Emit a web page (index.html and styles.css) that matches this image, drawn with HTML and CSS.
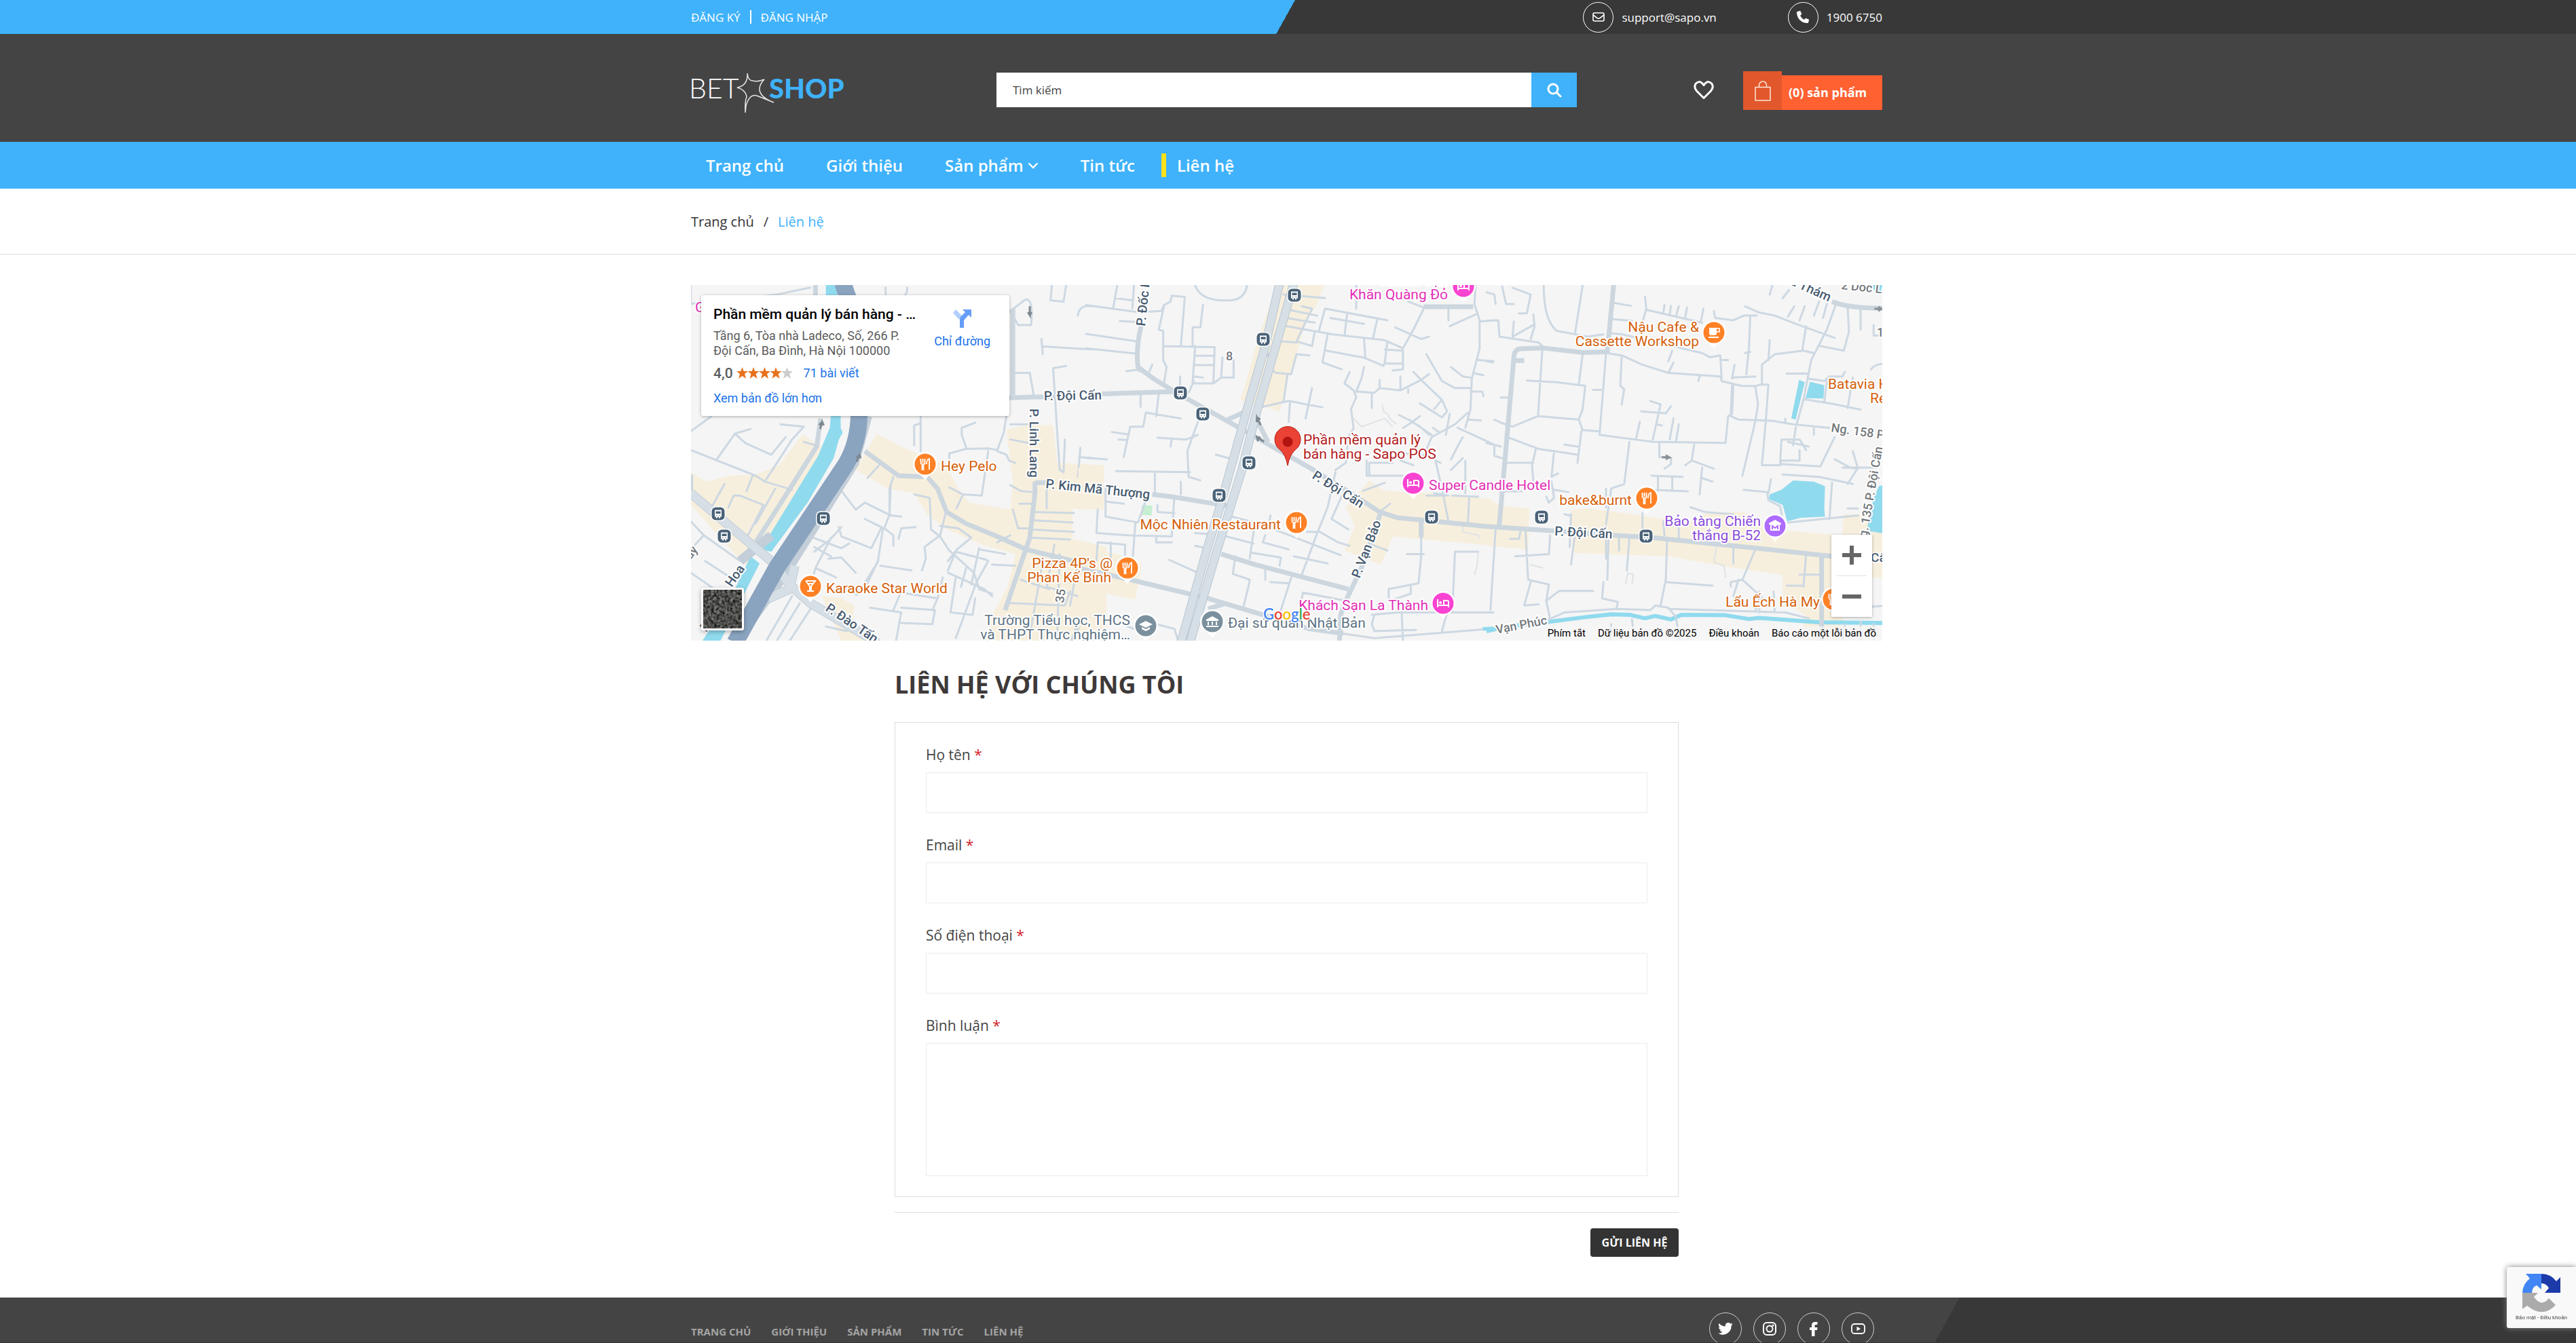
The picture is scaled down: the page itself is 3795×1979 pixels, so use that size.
FILE: index.html
```html
<!DOCTYPE html>
<html lang="vi">
<head>
<meta charset="utf-8">
<title>Liên hệ - Bet Shop</title>
<meta name="viewport" content="width=device-width, initial-scale=1">
<link rel="stylesheet" href="styles.css">
</head>
<body>
<div class="page">
<header>
  <div class="topbar">
    <div class="container topbar-row">
      <div class="account"><a href="#">ĐĂNG KÝ</a><span class="divider"></span><a href="#">ĐĂNG NHẬP</a></div>
      <div class="contacts">
        <a href="mailto:support@sapo.vn"><span class="ring ring-sm"><svg width="18" height="14" viewBox="0 0 18 14" fill="none" stroke="#fff" stroke-width="1.6"><rect x="1" y="1" width="16" height="12" rx="2"/><path d="M1 4l6 4.6q2 1.4 4 0L17 4"/></svg></span>support@sapo.vn</a>
        <a href="tel:19006750"><span class="ring ring-sm"><svg width="18" height="18" viewBox="0 0 18 18" fill="#fff"><path d="M1 .9 4.6 0q.7 0 1 .6l1.5 3.6q.2.7-.3 1.2L5 7q2 4 6 6l1.600-1.800q.5-.5 1.200-.3l3.600 1.500q.7.300.6 1l-.9 3.700q-.2.800-1 .9Q9 18 4.500 13.500T0 2.000Q.1 1.100 1 .9Z"/></svg></span>1900 6750</a>
      </div>
    </div>
  </div>
  <div class="masthead">
    <div class="container masthead-row">
      <a class="logo" href="#" aria-label="Bet Shop">
        <svg width="240" height="70" viewBox="0 -4 240 70"><text x="-3" y="43" class="logo-thin">BET</text><text x="115" y="43" class="logo-bold">SHOP</text><path d="M83 6Q84 17 91 17Q98 19 108 15Q100 23 101 31Q103 42 122 49L97 39Q86 36 81 54L80 64Q79 48 82 40Q80 30 68 27Q84 24 83 6Z" fill="none" stroke="#e4e4e4" stroke-width="1.500"/></svg>
      </a>
      <form class="search" role="search">
        <input type="text" placeholder="Tìm kiếm" aria-label="Tìm kiếm">
        <button type="button" aria-label="Tìm"><svg width="22" height="22" viewBox="0 0 22 22" fill="none" stroke="#fff" stroke-width="3"><circle cx="9" cy="9" r="7"/><path d="M14 14l6 6" stroke-linecap="round"/></svg></button>
      </form>
      <a class="wish" href="#" aria-label="Yêu thích"><svg width="30" height="28" viewBox="0 0 30 28" fill="none" stroke="#fff" stroke-width="3"><path d="M15 25.500 4.500 15Q0 10 3 4.500Q8-1 13 4L15 6.500 17 4Q22-1 27 4.500Q30 10 25.500 15Z" stroke-linejoin="round"/></svg></a>
      <a class="cart" href="#"><span class="cart-icon"><svg width="24" height="30" viewBox="0 0 24 30" fill="none" stroke="#ffe9d8" stroke-width="1.500"><rect x="1" y="9.500" width="22" height="19.500"/><path d="M6.500 9V6.500a5.500 5.500 0 0 1 11 0V9"/></svg></span><span class="cart-text">(0) sản phẩm</span></a>
    </div>
  </div>
  <nav class="menu">
    <div class="container">
      <ul>
        <li><a href="#">Trang chủ</a></li>
        <li><a href="#">Giới thiệu</a></li>
        <li><a href="#">Sản phẩm<svg width="16" height="10" viewBox="0 0 16 10" fill="none" stroke="#fff" stroke-width="2.400"><path d="M1.500 1.500 8 8l6.500-6.500"/></svg></a></li>
        <li><a href="#">Tin tức</a></li>
        <li class="active"><a href="#">Liên hệ</a></li>
      </ul>
    </div>
  </nav>
</header>
<div class="crumbs">
  <div class="container crumbs-row"><a href="#">Trang chủ</a><span>/</span><span class="here">Liên hệ</span></div>
</div>
<main class="container">
  <section class="map" aria-label="Bản đồ">
    <svg class="map-canvas" viewBox="0 0 1755 524" preserveAspectRatio="xMidYMid slice">
      <defs>
        <g id="bus"><rect x="-11" y="-11" width="22" height="22" rx="7" fill="#fff"/><rect x="-9.500" y="-9.500" width="19" height="19" rx="6" fill="#4b6378"/><path d="M-5-5.500h10v10h-2v2h-2v-2h-2v2h-2v-2h-2z" fill="#fff"/><path d="M-3.500-3.500h7v3.500h-7zM-3 2h1.500v1h-1.500zM1.500 2h1.500v1h-1.500z" fill="#4b6378"/></g>
        <path id="drop" d="M0 23.500Q-4 17-11 14A18 18 0 1 1 11 14Q4 17 0 23.500Z" fill="#fff"/>
        <g id="food"><use href="#drop"/><circle r="15.500" fill="#ff8126"/><path d="M-6.500-8v6q.5 2 2 2v8h2v-8q2 0 2-2v-6M-3.500-8v6M2 0q0-7 4-8v16" fill="none" stroke="#fff" stroke-width="1.800"/></g>
        <g id="bed"><use href="#drop"/><circle r="15.500" fill="#f943d1"/><path d="M-8-6V6M8 6V-2q0-2-2-2h-5v6M-8 3H8" fill="none" stroke="#fff" stroke-width="2"/><circle cx="-4" cy="-1" r="2" fill="#fff"/></g>
        <g id="grad"><use href="#drop"/><circle r="15.500" fill="#7b909d"/><path d="M0-7 10-2 0 3-10-2ZM-6 2v3l6 3 6-3v-3l-6 3z" fill="#fff"/></g>
        <g id="house"><path d="M0-8 9-3v2H-9v-2ZM-7 0h2v5h-2zM-1 0h2v5h-2zM5 0h2v5h-2zM-9 6H9v2H-9z" fill="#fff"/></g>
      </defs>
      <rect width="1755" height="524" fill="#f5f5f5"/>
      <!-- western sheet -->
      <g transform="translate(-8 -10) scale(.3827 .3444)">
        <path class="zone" d="M20 830 80 870 170 845 270 840 360 800 450 670 525 720 440 930 290 1150 230 1230 20 970ZM735 665 830 720 1000 800 1050 900 1090 960 1250 990 1260 870 1235 650 1300 630 1415 628 1430 790 1610 800 1610 990 1490 985 1490 1115 1620 1150 1620 1560 1150 1560 1180 1440 1240 1320 1270 1180 1140 1140 1000 1070 930 1010 880 920 780 900 655 820ZM525 1360 600 1370 650 1400 640 1480 760 1553 600 1553Z"/>
        <path class="water" d="M540 20h45v150h-45zM560 580H597V640L605 660 590 690 570 770 470 960 330 1170 290 1160 510 760 555 640ZM250 1190 285 1220 130 1560H60L190 1330Z"/>
        <path class="lane" d="M20 110 200 90 350 70 480 40M20 100V20M770 40V80H825Q855 80 853 40M1410 95 1455 100 1465 30M1410 30 1405 95M1250 140 1310 90Q1340 90 1330 200L1280 200 1250 140M1370 260 1375 325M1375 292 1568 305M1510 160Q1515 110 1568 120M1270 405H1325L1340 500M1465 375 1415 385 1425 560 1440 820 1455 830 1460 690M905 740V560M880 715V630L905 620M1115 618 1063 640V670L1082 730M1015 770V750L1080 730 1165 728 1200 735 1225 660 1235 590M1200 740 1235 755 1245 780 1270 790M1165 740 1140 930 1068 925 1015 895M1068 925 1043 985M20 735 270 845 305 870 410 905M305 870 410 690 455 635 365 625M120 775 190 665 250 645M190 665 230 705 330 755 385 680M455 700 500 715M20 655 100 590M260 840 235 910M150 880 105 970M270 1050 345 900M165 980 185 930 210 930 300 970 240 1100M700 855 745 800M880 925 940 940 945 1075 980 1105 1015 1165 1110 1260 1130 1330 1180 1350M980 1060 1050 1070 1100 1110 1045 1160 1010 1210M600 910 655 990 690 960 790 1015 830 1020M790 880 785 1010 765 1070 800 1100 800 1145M690 1030 755 1065 715 1155 600 1105 590 1065M600 1065 555 1120 495 1170M480 1105 600 1155 630 1135M495 1150 560 1190M820 1115 830 1070 885 1065M800 850 785 900V1010M1000 1010 980 1100 920 1150 925 1200 910 1250M1160 1205 1040 1170 1010 1250M760 1070 740 1215 660 1355 620 1330M560 1110 500 1240 480 1320M550 1200 600 1195 655 1260M500 1240 580 1280M740 1210 690 1330M750 1230 870 1250M1165 1210 1120 1300 1040 1540M1130 1155 1100 1310M1010 1260 1150 1330 1180 1360M1040 1280 1020 1430 1105 1440 1115 1370M800 1340 970 1370 990 1280M970 1370 950 1420M830 1340 800 1420M710 1410 830 1430 810 1553M830 1475 950 1480 960 1420 830 1410M1080 1240 1060 1320M1270 1230 1180 1225M1230 1180 1130 1160M1250 1100 1200 1130M1260 990 1280 1070 1320 1070M1285 965H1330M1340 1000 1495 1005M1330 1035 1490 1045M1330 1075 1495 1085M1325 1110 1480 1118M1250 885 1290 910 1335 915M1390 985V900M1250 625H1340M1250 690 1320 705M1520 725 1510 850M1515 765 1568 770M1520 1160 1480 1400M1420 1140 1390 1320 1540 1370M1290 1290 1400 1330M1380 1180 1320 1560M1440 1180 1430 1560M1480 1340 1460 1400 1250 1390M75 1210 200 1300M70 1100 20 1160M20 1040 70 1100 210 1210M20 1260 150 1360M440 1390 350 1553M490 1400 400 1553M410 1360 310 1553M540 1490 620 1510"/>
        <path class="street" d="M500 20V80M690 740 820 845 930 850 970 900 1005 1000 1080 1050 1200 1105 1310 1160 1568 1230M1240 512 1340 508 1420 508M1345 870V920L1325 1110 1230 1420M1345 875H1420M1260 130V500M1568 1290 1540 1390 1490 1553M520 600 505 720 270 1130M20 840V910"/>
        <path class="avenue-edge" d="M20 920 340 1220 400 1310 480 1390 740 1560M320 1370 400 1330 420 1230M210 1210 330 1100M700 590 650 790 380 1270 190 1560"/>
        <path class="avenue" d="M20 920 340 1220 400 1310 480 1390 740 1560M320 1370 400 1330 420 1230"/>
        <path class="highway" d="M605 20 640 130 668 560Q670 700 615 800L350 1240 190 1560"/>
        <path d="M518 645 526 615 532 630M526 615 514 628M658 785 670 757 674 770M670 757 658 768M1325 120V158L1318 145M1325 158 1332 145" stroke="#7d8890" stroke-width="3" fill="none"/>
      </g>
      <!-- central sheet -->
      <g transform="translate(582 -10) scale(.3827 .3444)">
        <path class="zone" d="M740 20 915 30 890 110 840 200 810 330 780 420 745 570 595 520 660 270 690 170ZM-30 810 55 820 45 985-30 990ZM-30 1150 120 1180 215 1220 190 1375 60 1345-30 1500ZM1090 865 1150 910 1330 920 1555 945 1600 980 1600 1148 1180 1105 1135 1225 995 1165 1035 1060 1000 980Z"/>
        <path d="M215 970 255 973 252 1015 213 1012Z" fill="#c5efd0"/>
        <path class="lane" d="M0 115 200 145 290 140 300 115 325 100 330 75 380 80 365 290M120 30 105 125M185 20 178 130M110 85 180 95M300 120 280 220 297 225V350L310 380 300 450M297 290 495 295 490 450H410L420 290M420 332H495M420 372H490M450 115 440 210H410V295M415 420 450 425M490 450 520 425 525 340M520 425H568V350M395 490 415 440M130 183 195 187M0 238 195 270M0 300 190 322M155 398 195 392 240 410 255 370M362 420V470M210 495V550M280 490 270 590M230 575 365 600M230 575 220 635 170 635 145 765M100 658 160 668M125 690 155 692M435 600 390 740 395 850 440 865M275 682 385 690 430 670M330 685 325 720M115 825 400 830M265 835V920M0 768 80 775M365 870V925M75 890V1020L200 1045 240 920M75 955 145 965M45 990 40 1090 160 1100 330 1105 340 930M275 970V1000L340 1005M180 1190 190 1045M40 1210 45 1130 150 1140V1190M95 1130V1200M270 1105V1130H330M500 755 550 770M420 30Q440 100 550 95 610 95 620 30M760 70 920 85M780 135 890 160M770 170 880 190M770 205 950 240 1150 265 1220 300M830 120 870 130 810 270 870 290 880 230M750 270 810 275M860 330 810 325 790 410 730 405 720 395M775 415 760 530M680 550 780 525 850 540 910 552M870 470 845 600M785 530 780 615M895 230 920 130 1160 180M940 170 1070 195M1120 180 1105 255M1005 150 995 245M1040 130V20M930 240 910 360 985 390M925 310 1070 340 1145 375 1150 360 1160 270M1070 260 1075 340M1150 305 1220 310 1220 390 1180 395M1155 365H1215M1220 300 1260 220 1300 130M1190 210 1290 260 1320 250M1400 205 1500 155M1568 180 1515 185M1240 100 1300 125M1395 120V180M1500 20 1495 110 1515 180 1515 300 1485 430 1480 560 1460 640M1430 640 1568 710M1470 605 1520 608M1405 380 1450 420 1480 425M1310 325 1370 440 1420 470H1480M1400 580 1385 670M1510 350 1568 355M1490 405 1530 415M1480 485H1525L1530 505M1015 400 995 450 1030 480 1040 510 1020 560 1030 640 1010 680 1000 790 960 820M1040 485 1110 490 1130 470 1210 480 1290 435 1320 410M1070 380 1060 430 1040 485M1100 490V555M1130 470V435M1210 480V420M1240 490V475M1260 400 1290 435 1370 520 1390 570 1370 595 1320 560 1285 535M1370 520 1340 560M1205 585 1250 610 1330 670M1285 590 1250 620 1220 640M1280 630 1320 670M1335 640 1360 660M1450 680 1430 720 1405 775M1080 780V845H1140 1240M1090 840V790H1130 1180M1210 780 1260 800M1160 740 1300 760 1330 680 1420 625 1470 575M1460 780V920M1405 820 1450 770M1365 790 1345 780 1370 900 1395 1040M1310 930H1380M1410 930 1510 935M1475 940 1470 1050M1340 920 1395 930M960 830 930 980 890 1090 830 1270M985 930 945 1030 1010 1075M1150 875 1065 910M1170 965 1130 1000M850 1085H900L970 1130 1015 1145M560 1020 650 1045 760 1090 980 1185M690 1100 680 1130 780 1160M650 1045 630 1200M540 1105 645 1135M710 1015 700 1070M640 1175 750 1195 745 1230M800 1190 930 1220M575 1190 565 1265 630 1290 625 1320 605 1410M690 1240V1290M710 1300 780 1305M790 1280 750 1420M1100 1140 1160 1165M1300 1180H1235M1290 1040 1290 1190 1280 1305 1165 1330V1370M1250 1320V1350L1170 1380M1410 1430 1420 1170H1510M830 1370 835 1345 1000 1380M320 1205 430 1260M420 1090 470 1095M420 1145 460 1155M270 1480 340 1500 355 1553M160 1490 230 1520M1100 1440 1200 1430 1568 1430M1110 1440 1100 1480 1110 1510 1270 1505M1215 1430 1220 1553M1390 1430 1370 1510M985 1520 1110 1540 1560 1500"/>
        <path class="faint" d="M1030 600 1060 635 1150 600 1180 635M1140 540 1145 570 1160 580 1170 600 1195 625M1450 1060V1085L1510 1100 1515 1115M1510 1170 1505 1230 1495 1270"/>
        <path class="street" d="M215 190Q190 300 200 380L260 430 340 485 380 510 590 640 700 710 860 810M60 495 340 485M255 925 330 935 550 975M860 810 1020 920 1130 1000 1200 1025 1300 1035 1568 1065M1135 1000 1060 1240 1000 1380 980 1440 975 1560M520 1180 650 1225 1010 1330M190 1295 470 1370 680 1440 860 1500 990 1520M-30 1240 190 1295M545 605 605 575M690 325 720 335M700 700 655 600M1300 122H1490M1290 1035V1110M470 1415 540 1390"/>
        <path class="road-edge" d="M745 20 690 290 630 520 590 680 520 960 460 1180 365 1560M800 20 720 330 650 600 600 820 550 1000 500 1180 400 1560"/>
        <path class="road" d="M745 20 690 290 630 520 590 680 520 960 460 1180 365 1560M800 20 720 330 650 600 600 820 550 1000 500 1180 400 1560"/>
        <path d="M672 628 658 596 657 616M658 596 671 604M685 700 658 680 662 698M658 680 672 682" stroke="#7d8890" stroke-width="3" fill="none"/>
        <path class="water" d="M1525 1493 1568 1490V1508H1530Z"/>
      </g>
      <!-- eastern sheet -->
      <g transform="translate(1172 -10) scale(.3827 .3444)">
        <path class="zone" d="M0 950 20 970 165 985 160 1160 0 1145ZM325 990 400 985 500 1000 680 1030 800 1040 850 1000 990 1000 1050 1035 1150 1080 1370 1100 1375 1010 1530 1015V1280L1390 1290 1360 1553H1215L1225 1440 1140 1380 1140 1270 900 1230 700 1190 330 1175Z"/>
        <path class="water" d="M1203 435 1225 445 1190 605 1173 600ZM1245 443 1300 457 1297 515 1228 513ZM1180 865 1260 870 1303 890 1300 985 1303 1020 1210 1025 1157 1040 1140 970 1087 945 1090 925 1135 905ZM1510 890 1530 883V1092L1463 1080 1490 940ZM1465 35 1525 20V70Z"/>
        <path class="canal" d="M0 1510 80 1490 240 1470 380 1450 480 1438 550 1440 610 1455 650 1445 710 1460 750 1440 920 1442 1010 1458 1050 1453 1280 1472 1530 1475"/>
        <path class="lane" d="M0 60 30 70 35 110M60 35 75 110 105 110M100 40 170 70 155 150 125 150M0 182 45 180 50 250 200 275 215 290M105 185 100 250 180 200M180 155 185 205 170 260M220 30Q220 180 270 225L390 250 450 240M370 30 340 240M215 300 205 470 198 590 100 635 60 620 30 605M155 438 270 445 380 460 370 560 355 605 198 590M370 325 355 455M355 605 370 650 430 655M365 655 350 790M80 680 200 730 350 755M300 712 350 720M190 730 175 800 180 865M65 790H180M260 740 250 850 275 835M250 870 260 940 240 960 230 935M460 320 435 670 570 690 640 700 920 705 930 590 945 580 950 455M460 320 520 330 600 370 700 405 900 420 905 440 980 460 1040 462M520 335 515 460 530 475 520 540M410 478H440M490 105 555 118M485 175 560 182M480 235 520 240 600 260 830 320 860 338 900 330M610 80 615 130 590 230M615 135 830 190M685 115 680 150M710 118 705 155M740 120 730 160M772 125 765 165M835 130 825 185M875 140 880 170 950 180 990 160 1040 160M995 120 1045 145 1110 160 1190 195 1340 255M900 335 905 430M905 350H930M700 355 715 310M700 405 720 360M1015 165 1010 300 1000 410M995 320 1015 315M950 425 1035 420M955 370 945 430M945 460 940 590 970 605 1100 610 1180 625 1320 640M1035 465 1045 540 1035 610 985 845M1040 460 1055 455 1085 455 1075 610 1060 800M1060 450V370L1110 325 1220 310 1260 320M1090 265 1085 350M1100 30 1090 70M1140 85 1165 50M1160 165 1185 120M1205 180 1225 120M1260 160 1280 100M1295 170 1310 110M1345 110 1310 220 1250 350 1220 520 1190 640 1180 715M1390 120 1395 230 1375 310 1285 290M1230 205 1215 310M1155 408 1235 408M1240 430 1300 440 1320 420 1370 420 1380 400M1225 518 1320 535 1440 562M1310 440 1300 530M1410 425 1390 555M1490 200V245H1510M1480 390Q1490 370 1530 365M1440 130V220M820 420 815 440M630 525 670 540 640 690M595 570 690 578 710 548M590 615 575 690M655 625 675 630M720 600 705 690M740 625 730 695M665 705V765L710 770V795L685 815M800 705 790 780 765 800M790 780 875 815M830 810 820 925M830 855 870 870M635 845 755 850M660 850V910M715 850V905M635 905 775 912M550 700 530 880 480 900 460 1050M470 1100 465 1290M460 900 460 980M460 1060V1200M150 1085 160 1290 240 1310 230 1380 245 1460M90 1115H125L130 1085M110 1190 240 1180 245 1100M170 1300 145 1400 200 1395M35 1070 15 1420M325 1010 320 1150M300 1010 320 1015M340 1100 325 1225M550 1110 540 1250M695 1120 690 1290 670 1400M690 1300 870 1315M510 1100V1165M230 1380 280 1338H410M450 1300 445 1370 505 1385 500 1415 300 1430 240 1460M500 1415 630 1420 650 1400 700 1410 730 1450M600 1005V1100M680 1040 685 1100M740 1060V1110M785 980 840 1000 950 1010M950 1150V1220M1035 1160 985 1290 940 1300V1320M985 1290 1060 1365 1035 1420M970 1290 950 1360M700 1415 1150 1430 1240 1455M730 1460 745 1553M480 1480 475 1553M560 1460 570 1553M1085 920 1095 860M990 905 1080 915 1085 950 1130 975 1140 1030M1160 1045 1430 1015M1140 840 1280 850 1410 880M1060 800 1130 800 1135 780 1205 780 1205 735M1135 690H1205L1230 735M1135 695 1130 795 1285 805 1340 680M1260 640V670M1340 775 1400 810 1430 815 1410 740M1430 810 1390 880M1370 810H1500M1330 875 1320 1030M1205 1268H1290M1155 1315H1220M1230 1185 1220 1320M1390 985H1430M1050 1340V1430M1105 1340 1110 1430M1380 1480 1370 1553M1440 1470V1553M1490 1480V1553M1560 1400 1480 1405M0 705 55 720M30 720V760L60 770M0 355 25 360M55 510H85M50 912H135M260 905 315 915M1160 700 1240 720M1150 600V620"/>
        <path class="faint" d="M885 1150 875 1215 915 1230 920 1280M545 1255 535 1310M545 1265H565L560 1310M165 1225 220 1240"/>
        <path class="street" d="M490 20 465 315 370 318 215 298 125 302Q105 310 105 340L48 1070M0 1062 250 1080 490 1100 640 1110 1040 1155 1330 1190M1290 1190V1553M1330 100Q1400 130 1530 128M105 352H145"/>
        <path d="M675 766H703L690 757M703 766 690 775M1493 131H1520L1508 122M1520 131 1508 140" stroke="#8b9298" stroke-width="3" fill="none"/>
      </g>
      <use href="#bus" x="40" y="337"/><use href="#bus" x="49" y="370"/><use href="#bus" x="195" y="344"/><use href="#bus" x="889" y="15"/><use href="#bus" x="843" y="80"/><use href="#bus" x="721" y="159"/><use href="#bus" x="754" y="190"/><use href="#bus" x="822" y="262"/><use href="#bus" x="778" y="310"/><use href="#bus" x="1091" y="342"/><use href="#bus" x="1253" y="342"/><use href="#bus" x="1407" y="370"/>
      <use href="#food" x="345" y="264"/><use href="#food" x="892" y="350"/><use href="#food" x="643" y="417"/><use href="#food" x="1408" y="314"/><use href="#food" x="1683" y="463"/>
      <use href="#bed" x="1064" y="292"/><use href="#bed" x="1108" y="469"/><use href="#bed" x="1138" y="2"/>
      <use href="#grad" x="670" y="502"/>
      <g transform="translate(768 496)"><use href="#drop"/><circle r="15.500" fill="#7b909d"/><use href="#house"/></g>
      <g transform="translate(1597 355)"><use href="#drop"/><circle r="15.500" fill="#ae6bff"/><path d="M0-9 9-4v2H-9v-2ZM-7-2h14v9h-14z" fill="#fff"/><path d="M-4 5v-5l4 3 4-3v5" stroke="#ae6bff" stroke-width="2" fill="none"/></g>
      <g transform="translate(1507 70)"><use href="#drop"/><circle r="15.500" fill="#ff8126"/><path d="M-7-7H4V1q0 3-3 3h-5q-3 0-3-3zM-8 6H7v2H-8z" fill="#fff"/><path d="M4-6h4v5H4" fill="none" stroke="#fff" stroke-width="1.600"/></g>
      <g transform="translate(176 444)"><use href="#drop"/><circle r="15.500" fill="#ff8126"/><path d="M-7-8H7L1 0v7H5M-5 7H1M-1 7V0L-7-8M-4-4H4" fill="none" stroke="#fff" stroke-width="2"/></g>
      <path d="M879 266Q876 250 868 243A19 19 0 1 1 890 243Q882 250 879 266Z" fill="#ea4335" stroke="#b81d14"/><circle cx="879" cy="231" r="7.500" fill="#b31412"/>

      <g class="place eat">
        <text x="368" y="274">Hey Pelo</text>
        <text x="199" y="454">Karaoke Star World</text>
        <text x="621" y="417" text-anchor="end">Pizza 4P's @</text><text x="619" y="438" text-anchor="end">Phan Kế Bính</text>
        <text x="869" y="360" text-anchor="end">Mộc Nhiên Restaurant</text>
        <text x="1485" y="69" text-anchor="end">Nậu Cafe &amp;</text><text x="1485" y="90" text-anchor="end">Cassette Workshop</text>
        <text x="1386" y="324" text-anchor="end">bake&amp;burnt</text>
        <text x="1663" y="474" text-anchor="end">Lẩu Ếch Hà My</text>
        <text x="1675" y="153">Batavia H</text><text x="1737" y="174">Re</text>
      </g>
      <g class="place stay">
        <text x="6" y="40">G</text>
        <text x="1115" y="0" text-anchor="end">Khách Sạn</text><text x="1115" y="21" text-anchor="end">Khăn Quàng Đỏ</text>
        <text x="1087" y="302">Super Candle Hotel</text>
        <text x="1086" y="479" text-anchor="end">Khách Sạn La Thành</text>
      </g>
      <g class="place civic">
        <text x="647" y="501" text-anchor="end">Trường Tiểu học, THCS</text><text x="647" y="522" text-anchor="end">và THPT Thực nghiệm…</text>
        <text x="791" y="505">Đại sứ quán Nhật Bản</text>
      </g>
      <g class="place museum"><text x="1576" y="355" text-anchor="end">Bảo tàng Chiến</text><text x="1576" y="376" text-anchor="end">thắng B-52</text></g>
      <g class="place chosen"><text x="902" y="235">Phần mềm quản lý</text><text x="902" y="256">bán hàng - Sapo POS</text></g>
      <g class="place way">
        <text transform="translate(520 170) rotate(-1)">P. Đội Cấn</text>
        <text transform="translate(522 299) rotate(6)">P. Kim Mã Thượng</text>
        <text transform="translate(499 182) rotate(90)">P. Linh Lang</text>
        <text transform="translate(669 61) rotate(-84)">P. Đốc Ngữ</text>
        <text transform="translate(914 284) rotate(32)">P. Đội Cấn</text>
        <text transform="translate(985 433) rotate(-69)">P. Vạn Bảo</text>
        <text transform="translate(1272 369) rotate(3)">P. Đội Cấn</text>
        <text transform="translate(1596 -11) rotate(24)">Hoa Thám</text>
        <text x="1738" y="408">Cấn</text>
        <text transform="translate(60 446) rotate(-55)">Hoa</text>
        <text transform="translate(22 512) rotate(-50)">P.</text>
        <text transform="translate(197 479) rotate(34)">P. Đào Tấn</text>
      </g>
      <g class="place alley">
        <text x="788" y="111">8</text>
        <text transform="translate(1679 216) rotate(8)">Ng. 158 P.</text>
        <text transform="translate(1730 385) rotate(-80)">Ng. 135 P. Đội Cấn</text>
        <text transform="translate(1694 6) rotate(6)">2 Dốc Lập</text>
        <text transform="translate(1187 514) rotate(-11)">Vạn Phúc</text>
        <text transform="translate(549 469) rotate(-82)">35</text>
        <text transform="translate(0 405) rotate(-55)">ấy</text>
        <text x="1747" y="76">1</text>
      </g>
    </svg>
    <div class="map-card">
      <div class="map-info">
        <strong>Phần mềm quản lý bán hàng - …</strong>
        <p>Tầng 6, Tòa nhà Ladeco, Số, 266 P.<br>Đội Cấn, Ba Đình, Hà Nội 100000</p>
        <div class="rating"><b>4,0</b><svg width="83" height="18" viewBox="0 0 83 18"><defs><path id="star" d="M8.500 0 10.700 6H17l-5 4 2 7-5.500-4L3 17l2-7-5-4h6.300z"/></defs><g fill="#e7711b"><use href="#star"/><use href="#star" x="16.500"/><use href="#star" x="33"/><use href="#star" x="49.500"/></g><use href="#star" x="66" fill="#ccc"/></svg><a href="#">71 bài viết</a></div>
        <a href="#">Xem bản đồ lớn hơn</a>
      </div>
      <a class="directions" href="#"><svg width="28" height="28" viewBox="0 0 28 28"><path d="M4 1 14 11 9 16 0 6Z" fill="#b3cfff"/><path d="M14 1H27V13L23 9 16 17V28H10V16Q10 13 12 11L18 5Z" fill="#669df6"/></svg>Chỉ đường</a>
    </div>
    <button class="satellite" type="button" aria-label="Vệ tinh"><svg width="57" height="57"><filter id="grain" x="0" y="0" width="100%" height="100%" color-interpolation-filters="sRGB"><feTurbulence type="fractalNoise" baseFrequency=".25" numOctaves="4" seed="4"/><feColorMatrix values=".7 .3 0 0 -.2 .7 .3 0 0 -.2 .7 .3 0 0 -.21 0 0 0 0 1"/></filter><rect width="57" height="57" filter="url(#grain)"/></svg></button>
    <div class="zoomer">
      <button type="button" aria-label="Phóng to"><svg width="28" height="28" viewBox="0 0 28 28"><path d="M11 0h6v11h11v6H17v11h-6V17H0v-6h11z" fill="#666"/></svg></button>
      <button type="button" aria-label="Thu nhỏ"><svg width="28" height="28" viewBox="0 0 28 28"><path d="M0 11h28v6H0z" fill="#666"/></svg></button>
    </div>
    <a class="google" href="#"><span class="g-blue">G</span><span class="g-red">o</span><span class="g-yellow">o</span><span class="g-blue">g</span><span class="g-green">l</span><span class="g-red">e</span></a>
    <div class="legal"><button type="button">Phím tắt</button><span>Dữ liệu bản đồ ©2025</span><a href="#">Điều khoản</a><a href="#">Báo cáo một lỗi bản đồ</a></div>
  </section>

  <form class="contact">
    <h1>LIÊN HỆ VỚI CHÚNG TÔI</h1>
    <div class="fields">
      <label for="name">Họ tên <em>*</em></label><input id="name" type="text">
      <label for="email">Email <em>*</em></label><input id="email" type="email">
      <label for="phone">Số điện thoại <em>*</em></label><input id="phone" type="tel">
      <label for="body">Bình luận <em>*</em></label><textarea id="body"></textarea>
    </div>
    <div class="actions"><button type="button">GỬI LIÊN HỆ</button></div>
  </form>
</main>
<footer>
  <div class="container footer-row">
    <ul class="footer-links"><li><a href="#">TRANG CHỦ</a></li><li><a href="#">GIỚI THIỆU</a></li><li><a href="#">SẢN PHẨM</a></li><li><a href="#">TIN TỨC</a></li><li><a href="#">LIÊN HỆ</a></li></ul>
    <div class="social">
      <a class="ring" href="#" aria-label="Twitter"><svg width="22" height="18" viewBox="0 0 24 20" fill="#fff"><path d="M24 2.400a10 10 0 0 1-2.800.8A5 5 0 0 0 23.300.5a10 10 0 0 1-3.100 1.200 4.900 4.900 0 0 0-8.400 4.500A14 14 0 0 1 1.700 1a4.900 4.900 0 0 0 1.500 6.600 5 5 0 0 1-2.200-.6 4.900 4.900 0 0 0 4 4.900 5 5 0 0 1-2.300.1 4.900 4.900 0 0 0 4.600 3.400A10 10 0 0 1 0 17.500 14 14 0 0 0 21.500 5 10 10 0 0 0 24 2.400z"/></svg></a>
      <a class="ring" href="#" aria-label="Instagram"><svg width="20" height="20" viewBox="0 0 20 20" fill="none" stroke="#fff" stroke-width="2"><rect x="1" y="1" width="18" height="18" rx="5"/><circle cx="10" cy="10" r="4.500"/><circle cx="15" cy="5" r=".6"/></svg></a>
      <a class="ring" href="#" aria-label="Facebook"><svg width="12" height="21" viewBox="0 0 12 21" fill="#fff"><path d="M3 21V12H0V8h3V5q0-5 5-5h3.500v4H9Q7.500 4 7.500 5.500V8H11.500L11 12H7.500v9z"/></svg></a>
      <a class="ring" href="#" aria-label="YouTube"><svg width="21" height="16" viewBox="0 0 21 16"><rect x="1" y="1" width="19" height="14" rx="4" fill="none" stroke="#fff" stroke-width="1.800"/><path d="M8.500 4.800v6.400L14 8z" fill="#fff"/></svg></a>
    </div>
  </div>
</footer>
</div>
<div class="edge"></div>
<aside class="captcha">
  <svg width="56" height="56" viewBox="0 0 56 56"><path d="M28 0A28 28 0 0 1 50 11L56 5V28H33L39 21Q35 14 28 14Z" fill="#1c3aa9"/><path d="M28 0V23L21 17Q14 20 14 28H0A28 28 0 0 1 11 7L5 0Z" fill="#4285f4"/><path d="M0 28H23L17 34Q28 50 39 36L49 46Q30 66 7 47L0 52Z" fill="#ababab"/></svg>
  <div><a href="#">Bảo mật</a> - <a href="#">Điều khoản</a></div>
</aside>
</body>
</html>
```
FILE: styles.css
```css
* { box-sizing: border-box; }
body {
  margin: 0;
  background: #fff;
  color: #444;
  font-family: "Open Sans", sans-serif;
  font-size: 20px;
}
a { color: inherit; text-decoration: none; }
ul { margin: 0; padding: 0; list-style: none; }
button, input, textarea { font-family: inherit; border: 0; border-radius: 0; }
svg { display: block; }

.page { height: 100vh; overflow: hidden; }
.container { max-width: 1759px; margin: 0 auto; padding-right: 4px; }

/* header */
.topbar {
  background: linear-gradient(119deg, #3fb2fb calc(50% - 3px), #383838 calc(50% - 3px));
  color: #fff;
  font-size: 17px;
}
.topbar-row, .account, .contacts, .contacts a, .masthead-row, .search, .cart, .menu ul, .menu a, .crumbs-row, .footer-row, .footer-links, .social {
  display: flex;
  align-items: center;
}
.topbar-row { height: 50px; justify-content: space-between; }
.divider { width: 2px; height: 20px; margin: 0 14px; background: #fff; }
.contacts { gap: 105px; }
.contacts a { gap: 12px; }
.ring {
  display: flex;
  align-items: center;
  justify-content: center;
  width: 48px;
  height: 48px;
  border: 1px solid #ccc;
  border-radius: 50%;
}
.ring-sm { width: 45px; height: 45px; border-color: #fff; }
.masthead { background: #444; }
.masthead-row { height: 159px; padding-top: 6px; }
.logo { width: 450px; }
.logo svg { overflow: visible; }
.logo-thin, .logo-bold { font: 300 41px Lato, sans-serif; fill: #fff; }
.logo-bold { font-size: 40px; font-weight: 900; fill: #3fb2fb; }
.search { flex: 1; height: 51px; }
.search input {
  flex: 1;
  height: 51px;
  padding: 0 24px;
  background: #fff;
  font-size: 17px;
}
.search input::placeholder { color: #444; opacity: 1; }
.search button {
  display: grid;
  place-items: center;
  width: 67px;
  height: 51px;
  background: #3fb2fb;
}
.wish { margin: 0 43px 0 172px; }
.cart { align-items: flex-end; margin-top: 2px; color: #fff; font-size: 18px; font-weight: 700; }
.cart-icon { display: grid; place-items: center; width: 57px; height: 57px; background: #e3572c; }
.cart-text { width: 148px; height: 51px; padding-left: 10px; background: #ff6131; line-height: 51px; }
.menu { background: #3fb2fb; color: #fff; font-size: 24px; font-weight: 600; }
.menu ul { height: 69px; gap: 62px; padding-left: 22px; }
.menu a { gap: 6px; line-height: 35px; }
.menu .active { margin-left: -23px; padding-left: 16px; border-left: 7px solid #ffe11b; }
.crumbs { border-bottom: 1px solid #ddd; color: #333; }
.crumbs-row { height: 96px; gap: 14px; }
.here { color: #3fb2fb; }

/* map */
.map {
  position: relative;
  height: 524px;
  margin-top: 45px;
  overflow: hidden;
  font-family: Roboto, sans-serif;
}
.map-canvas { width: 100%; height: 100%; }
.map-canvas g path { vector-effect: non-scaling-stroke; }
.zone { fill: #f7efdd; }
.water { fill: #90daee; }
.lane, .faint, .street, .avenue, .avenue-edge, .highway, .road, .road-edge, .canal { fill: none; stroke-linejoin: round; }
.lane { stroke: #cdd8e2; stroke-width: 3; stroke-linecap: round; }
.faint { stroke: #dfe3e6; stroke-width: 2; }
.street { stroke: #ccd6de; stroke-width: 7; }
.canal { stroke: #90daee; stroke-width: 6; }
.avenue { stroke: #d6dfe6; stroke-width: 12; }
.avenue-edge { stroke: #c3ced8; stroke-width: 14; }
.road-edge { stroke: #b9c6d1; stroke-width: 13; }
.road { stroke: #d6dfe6; stroke-width: 11; }
.highway { stroke: #8aa3bf; stroke-width: 25; }
.place { font-size: 21px; stroke: #fff; stroke-width: 4px; stroke-linejoin: round; paint-order: stroke; }
.eat { fill: #d5600a; }
.stay { fill: #e22fb5; }
.civic { fill: #5d7384; }
.museum { fill: #8a4bdb; }
.chosen { fill: #b31b1b; }
.way { fill: #475b70; font-size: 19px; font-weight: 500; }
.alley { fill: #73787c; font-size: 18px; font-weight: 500; }
.map-card {
  position: absolute;
  top: 15px;
  left: 15px;
  display: flex;
  justify-content: space-between;
  width: 454px;
  height: 178px;
  padding: 14px 28px 0 18px;
  border-radius: 3px;
  background: #fff;
  box-shadow: 0 1px 4px rgba(0, 0, 0, .3);
  color: #5b5b5b;
  font-size: 18px;
  line-height: 22px;
}
.map-card a { color: #1a73e8; white-space: nowrap; }
.map-info { width: 310px; }
.map-card strong { display: block; color: #000; font-size: 21px; font-weight: 500; line-height: 28px; white-space: nowrap; }
.map-card p { margin: 7px 0 9px; white-space: nowrap; }
.rating { display: flex; align-items: center; height: 26px; margin-bottom: 13px; }
.rating b { font-size: 21px; font-weight: 500; }
.rating svg { margin: 0 16px 0 5px; }
.directions { display: flex; flex-direction: column; align-items: center; gap: 9px; padding-top: 6px; }
.satellite {
  position: absolute;
  bottom: 15px;
  left: 15px;
  padding: 3px;
  border-radius: 3px;
  background: #fff;
  box-shadow: 0 2px 6px rgba(0, 0, 0, .3);
}
.zoomer {
  position: absolute;
  right: 15px;
  bottom: 35px;
  display: flex;
  flex-direction: column;
  width: 60px;
  height: 121px;
  padding: 0 8px;
  background: #fff;
  box-shadow: 0 1px 4px rgba(0, 0, 0, .3);
}
.zoomer button { display: grid; place-items: center; flex: 1; padding: 0; background: none; }
.zoomer button + button { border-top: 1px solid #e0e0e0; }
.google { position: absolute; left: 843px; bottom: 24px; font: 600 22px/30px Lato, sans-serif; -webkit-text-stroke: 3px #fff; paint-order: stroke; }
.g-blue { color: #4285f4; }
.g-red { color: #ea4335; }
.g-yellow { color: #fbbc04; }
.g-green { color: #34a853; }
.legal {
  position: absolute;
  right: 0;
  bottom: 0;
  display: flex;
  gap: 18px;
  padding: 0 9px;
  background: rgba(245, 245, 245, .75);
  color: #000;
  font-size: 15px;
  line-height: 21px;
}
.legal button { padding: 0; background: none; color: inherit; font-size: inherit; line-height: inherit; }

/* contact form */
.contact { width: 1155px; max-width: 100%; margin: 0 auto; padding: 40px 0 60px; }
.contact h1 { margin: 0 0 30px; color: #3e3939; font-size: 36px; font-weight: 700; line-height: 50px; }
.fields { display: flex; flex-direction: column; padding: 30px 45px; border: 1px solid #ddd; font-size: 21px; }
.fields label { height: 43px; line-height: 34px; }
.fields em { color: #d2232a; font-style: normal; }
.fields input, .fields textarea { width: 100%; height: 60px; margin-bottom: 30px; border: 1px solid #ebebeb; background: #fff; }
.fields textarea { height: 196px; margin-bottom: 0; resize: none; }
.actions { display: flex; justify-content: flex-end; margin-top: 22px; padding-top: 23px; border-top: 1px solid #ddd; }
.actions button {
  width: 130px;
  height: 42px;
  padding: 0;
  border-radius: 4px;
  background: #333;
  color: #fff;
  font-size: 16px;
  font-weight: 700;
}

/* footer */
footer { background: linear-gradient(119deg, #444 calc(50% + 843px), #383838 calc(50% + 843px)); }
.footer-row { justify-content: space-between; padding-top: 22px; padding-bottom: 22px; }
.footer-links { gap: 30px; padding-top: 7px; color: #a4a4a4; font-size: 15px; font-weight: 700; }
.social { gap: 17px; margin-right: 12px; }
.edge { position: fixed; right: 0; bottom: 0; left: 0; height: 1px; background: #353535; }
.captcha {
  position: fixed;
  right: 0;
  bottom: 22px;
  display: flex;
  flex-direction: column;
  align-items: center;
  width: 102px;
  height: 90px;
  padding-top: 10px;
  border-radius: 3px 0 0 3px;
  background: #f9f9f9;
  box-shadow: 0 0 8px #808080;
  color: #444;
  font: 8px/18px Roboto, sans-serif;
}
```
